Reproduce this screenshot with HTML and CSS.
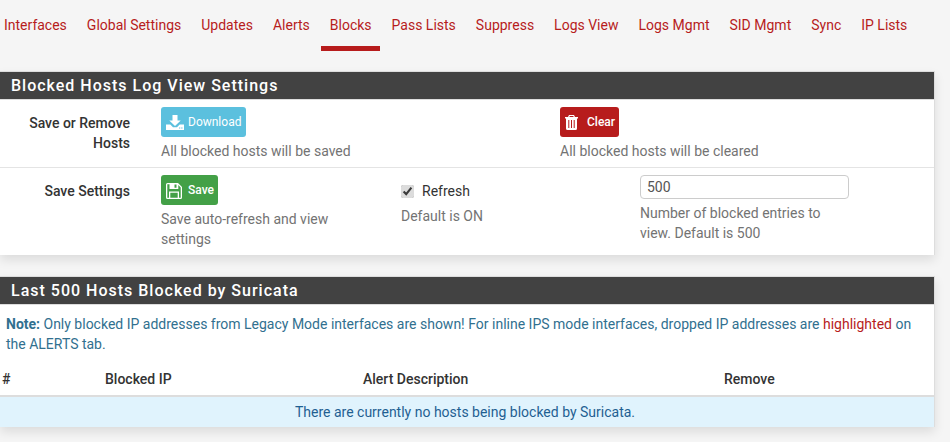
FILE: index.html
```html
<!DOCTYPE html>
<html lang="en">
<head>
<meta charset="utf-8">
<title>Suricata Blocks</title>
<link rel="stylesheet" href="styles.css">
</head>
<body>
<nav class="tabs">
  <a class="tab" href="#">Interfaces</a>
  <a class="tab" href="#">Global Settings</a>
  <a class="tab" href="#">Updates</a>
  <a class="tab" href="#">Alerts</a>
  <a class="tab active" href="#">Blocks</a>
  <a class="tab" href="#">Pass Lists</a>
  <a class="tab" href="#">Suppress</a>
  <a class="tab" href="#">Logs View</a>
  <a class="tab" href="#">Logs Mgmt</a>
  <a class="tab" href="#">SID Mgmt</a>
  <a class="tab" href="#">Sync</a>
  <a class="tab" href="#">IP Lists</a>
</nav>

<section class="panel panel-settings">
  <h2 class="panel-title">Blocked Hosts Log View Settings</h2>
  <div class="row row-first">
    <div class="label">Save or Remove Hosts</div>
    <div class="cell">
      <button class="btn btn-info" type="button">
        <svg class="icon" viewBox="0 0 18 15" width="18" height="15"><path fill="currentColor" fill-rule="evenodd" d="M6.500 0h5v5.500h3.200L9 11 3.300 5.500h3.200zM0 9.500h4.300L7 12.200h4l2.700-2.700H18V15H0zM13 12.500v1h1.300v-1zM15.200 12.500v1h1.300v-1z"/></svg>
        Download
      </button>
      <p class="help">All blocked hosts will be saved</p>
    </div>
    <div class="cell">
      <button class="btn btn-danger" type="button">
        <svg class="icon" viewBox="0 0 13 15" width="13" height="15"><path fill="currentColor" fill-rule="evenodd" d="M4 0h5l1 2h3v1.500h-1V13.500a1.500 1.500 0 0 1-1.500 1.500h-8A1.500 1.500 0 0 1 1 13.500V3.500H0V2h3zM4.800 1l-.5 1h4.400l-.5-1zM3.300 5v8h1V5zM6 5v8h1V5zM8.700 5v8h1V5z"/></svg>
        Clear
      </button>
      <p class="help">All blocked hosts will be cleared</p>
    </div>
  </div>
  <div class="row row-second">
    <div class="label">Save Settings</div>
    <div class="cell">
      <button class="btn btn-success" type="button">
        <svg class="icon" viewBox="0 0 16 16" width="16" height="16"><path fill="currentColor" fill-rule="evenodd" d="M1.500 0H12l4 4v10.500a1.500 1.500 0 0 1-1.500 1.500h-13A1.500 1.500 0 0 1 0 14.500v-13A1.500 1.500 0 0 1 1.500 0zM1.300 1.300v13.400H3V8.500h10v6.200h1.700V4.500L12.300 2v4H3.500V1.300zM4.300 9.800v4.900h7.400V9.800zM8.500 1.600v3.200h2V1.600z"/></svg>
        Save
      </button>
      <p class="help">Save auto-refresh and view settings</p>
    </div>
    <div class="cell">
      <label class="check"><input type="checkbox" checked> Refresh</label>
      <p class="help help-check">Default is ON</p>
    </div>
    <div class="cell">
      <input class="field" type="text" value="500">
      <p class="help help-field">Number of blocked entries to view. Default is 500</p>
    </div>
  </div>
</section>

<section class="panel panel-hosts">
  <h2 class="panel-title">Last 500 Hosts Blocked by Suricata</h2>
  <p class="note"><strong>Note:</strong> Only blocked IP addresses from Legacy Mode interfaces are shown! For inline IPS mode interfaces, dropped IP addresses are <span class="hl">highlighted</span> on the ALERTS tab.</p>
  <table class="hosts">
    <colgroup>
      <col class="c-num"><col class="c-ip"><col class="c-desc"><col class="c-rem">
    </colgroup>
    <thead>
      <tr><th>#</th><th>Blocked IP</th><th>Alert Description</th><th>Remove</th></tr>
    </thead>
    <tbody>
      <tr class="info-row"><td colspan="4">There are currently no hosts being blocked by Suricata.</td></tr>
    </tbody>
  </table>
</section>
</body>
</html>
```

FILE: styles.css
```css
* { box-sizing: border-box; }

html, body {
  margin: 0;
  height: 442px;
  overflow: hidden;
}

body {
  background: #f5f5f5;
  font-family: Roboto, "Liberation Sans", sans-serif;
  font-size: 14px;
  line-height: 20px;
  color: #333;
}

.tabs {
  display: flex;
  height: 51px;
  padding-left: 4px;
  gap: 20px;
}

.tab {
  position: relative;
  padding-top: 15px;
  color: #b71c1c;
  text-decoration: none;
}

.tab.active::after {
  content: "";
  position: absolute;
  left: -9px;
  right: -8px;
  bottom: 0;
  height: 5px;
  background: #b71c1c;
}

.panel {
  width: 935px;
  background: #fff;
  border-top: 1px solid #ddd;
  border-right: 1px solid #ddd;
  box-shadow: 0 5px 10px rgba(0, 0, 0, 0.1);
}

.panel-settings { margin-top: 20px; }
.panel-hosts { margin-top: 21px; }

.panel-title {
  margin: 0;
  height: 28px;
  padding-left: 11px;
  background: #424242;
  color: #fff;
  font-size: 16px;
  font-weight: 500;
  letter-spacing: 1px;
  line-height: 28px;
  border-bottom: 1px solid #ddd;
}

.row { display: grid; }

.row-first {
  grid-template-columns: 146px 399px 1fr;
  height: 68px;
  padding-top: 7px;
  border-bottom: 1px solid #e4e4e4;
}

.row-second {
  grid-template-columns: 146px 240px 239px 1fr;
  height: 87px;
  padding-top: 7px;
}

.label {
  padding: 6px 16px 0 0;
  text-align: right;
  font-weight: 500;
}

.cell { padding-left: 15px; }

.btn {
  display: inline-flex;
  align-items: center;
  height: 30px;
  padding: 0 4px;
  border: 1px solid transparent;
  border-radius: 3px;
  color: #fff;
  font-family: inherit;
  font-size: 12px;
  font-weight: 400;
}

.btn-info { background: #5bc0de; gap: 4px; }
.btn-danger { background: #b71c1c; gap: 9px; padding-right: 3px; font-weight: 500; width: 59px; }
.btn-success { background: #43a047; gap: 6px; padding-right: 3px; font-weight: 500; width: 57px; }

.icon { flex: none; display: block; margin-top: 1px; }

.help {
  margin: 4px 0 0;
  color: #737373;
}

.row-second .help { width: 209px; }
.row-second .help-check { margin-top: 5px; }

.check {
  display: flex;
  align-items: center;
  height: 20px;
  margin-top: 6px;
  gap: 8px;
}

.check input {
  width: 13px;
  height: 13px;
  margin: 0;
  accent-color: #dcdcdc;
}

.field {
  display: block;
  width: 209px;
  height: 24px;
  padding: 0 6px;
  border: 1px solid #ccc;
  border-radius: 4px;
  background: #fff;
  color: #555;
  font: inherit;
}

.note {
  margin: 0;
  padding: 9px 6px 0;
  color: #31708f;
}

.hl { color: #b71c1c; }

.hosts {
  width: 934px;
  margin-top: 6px;
  border-collapse: collapse;
  table-layout: fixed;
}

.c-num { width: 103px; }
.c-ip { width: 258px; }
.c-desc { width: 361px; }
.c-rem { width: 212px; }

.hosts th {
  height: 36px;
  padding: 5px 2px 3px;
  text-align: left;
  font-weight: 500;
  border-bottom: 2px solid #ddd;
}

.hosts td {
  height: 31px;
  padding: 0 4px 0 0;
  text-align: center;
  background: #e0f3fd;
  color: #1f5f92;
}
```
